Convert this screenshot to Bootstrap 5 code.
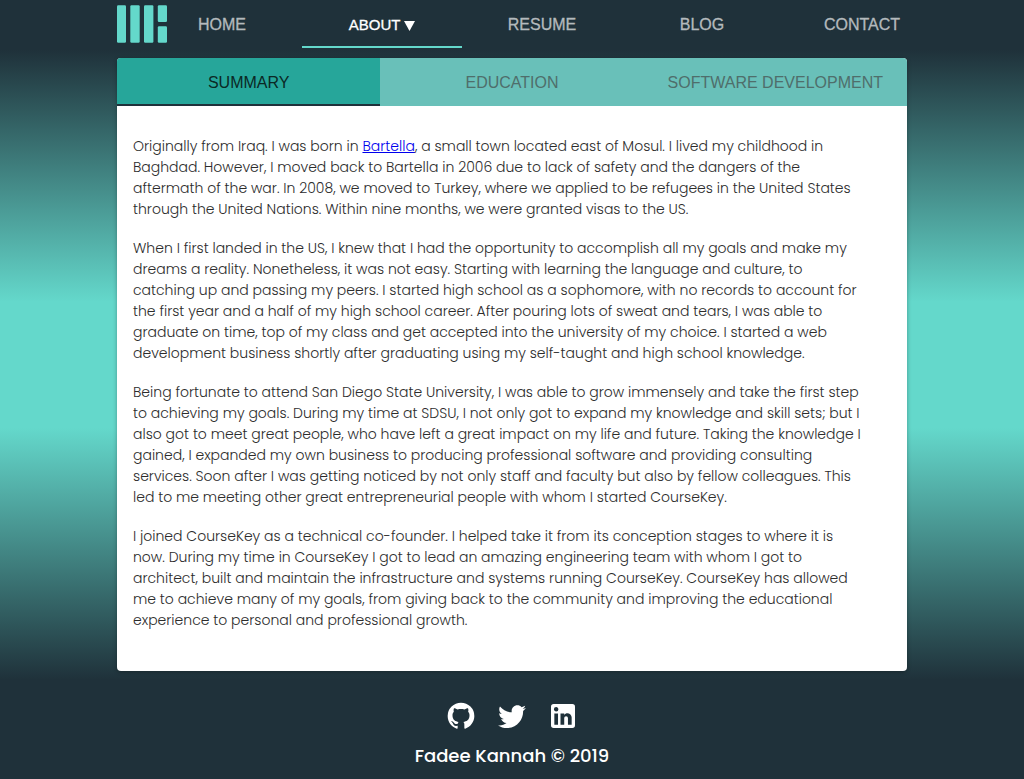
<!DOCTYPE html>
<html lang="en">
<head>
<meta charset="utf-8">
<meta name="viewport" content="width=device-width, initial-scale=1">
<title>Fadee Kannah - About</title>
<link href="https://cdn.jsdelivr.net/npm/bootstrap@5.3.0/dist/css/bootstrap.min.css" rel="stylesheet">
<style>
  :root { --ink: #1f313a; --aqua: #64d8cb; --teal: #26a69a; }
  body { background: var(--ink); font-family: Poppins, Inter, sans-serif; }
  .page-width { width: 100%; max-width: 790px; margin: 0 auto; }
  .site-header { min-height: 50px; }
  .site-links { display: grid; grid-template-columns: 135fr 160fr 160fr 160fr 125fr; }
  .site-links a, .site-links button {
    font: 16px/48px "Liberation Sans", sans-serif; color: #b4babd; text-align: center;
    text-decoration: none; background: none; border: 0; padding: 0; height: 48px; -webkit-text-stroke: 0.3px;
  }
  .site-links a { padding-top: 1px; }
  .site-links .first-link { padding-right: 25px; }
  .site-links .last-link { padding-left: 35px; }
  .site-links .current { color: #fff; font-size: 15px; line-height: 46px; padding-top: 2px; border-bottom: 2px solid var(--aqua); }
  .backdrop { background: linear-gradient(var(--ink), var(--aqua) 40%, var(--aqua) 60%, var(--ink)); padding: 8px 0 9px; }
  .panel { background: #fff; border-radius: 4px; overflow: hidden; box-shadow: 0 1px 4px rgba(0,0,0,.3); }
  .section-tabs { background: #69c0b9; }
  .section-tabs button {
    height: 48px; border: 0; border-bottom: 2px solid transparent; background: none; padding: 3px 0 0;
    font: 16px "Liberation Sans", sans-serif; color: #4f6e6b; white-space: nowrap;
  }
  .section-tabs .active { background: var(--teal); color: #0b2925; border-bottom-color: var(--ink); }
  .story { padding: 30px 16px 22px; font-size: 14px; line-height: 21px; font-weight: 300; color: #2c2c2c; }
  .story p { margin-bottom: 18px; }
  .story a { color: #0000ee; }
  .site-footer { padding: 20px 0 9px; color: #fff; }
  .site-footer a { color: #fff; line-height: 0; }
  .footer-icons { gap: 19px; }
  .credit { font-size: 18px; line-height: 28px; font-weight: 500; margin: 10px 0 0; }
</style>
</head>
<body>
<header class="site-header">
  <nav class="page-width d-flex" aria-label="Main">
    <a href="#" class="flex-shrink-0" aria-label="Fadee Kannah">
      <svg class="d-block" width="50" height="48" viewBox="0 0 50 48" fill="#64d8cb"><rect x="0" y="5.3" width="9" height="37.4" rx="1.2"/><rect x="13.3" y="5.3" width="9.4" height="37.4" rx="1.2"/><rect x="27" y="5.3" width="9.4" height="37.4" rx="1.2"/><rect x="40.8" y="5.3" width="9.2" height="16.6" rx="1.2"/><rect x="40.8" y="26.3" width="9.2" height="16.4" rx="1.2"/></svg>
    </a>
    <div class="site-links flex-grow-1">
      <a href="#" class="first-link">HOME</a>
      <button type="button" class="current">ABOUT <svg width="11" height="10" viewBox="0 0 11 10" fill="currentColor"><path d="M0 0h11L5.500 10z"/></svg></button>
      <a href="#">RESUME</a>
      <a href="#">BLOG</a>
      <a href="#" class="last-link">CONTACT</a>
    </div>
  </nav>
</header>
<main class="backdrop">
  <div class="panel page-width">
    <div class="section-tabs row g-0" role="tablist">
      <button type="button" class="col active" role="tab" aria-selected="true">SUMMARY</button>
      <button type="button" class="col" role="tab" aria-selected="false">EDUCATION</button>
      <button type="button" class="col" role="tab" aria-selected="false">SOFTWARE DEVELOPMENT</button>
    </div>
    <article class="story">
      <p>Originally from Iraq. I was born in <a href="#">Bartella</a>, a small town located east of Mosul. I lived my childhood in <br class="d-none d-md-inline">Baghdad. However, I moved back to Bartella in 2006 due to lack of safety and the dangers of the <br class="d-none d-md-inline">aftermath of the war. In 2008, we moved to Turkey, where we applied to be refugees in the United States <br class="d-none d-md-inline">through the United Nations. Within nine months, we were granted visas to the US.</p>
      <p>When I first landed in the US, I knew that I had the opportunity to accomplish all my goals and make my <br class="d-none d-md-inline">dreams a reality. Nonetheless, it was not easy. Starting with learning the language and culture, to <br class="d-none d-md-inline">catching up and passing my peers. I started high school as a sophomore, with no records to account for <br class="d-none d-md-inline">the first year and a half of my high school career. After pouring lots of sweat and tears, I was able to <br class="d-none d-md-inline">graduate on time, top of my class and get accepted into the university of my choice. I started a web <br class="d-none d-md-inline">development business shortly after graduating using my self-taught and high school knowledge.</p>
      <p>Being fortunate to attend San Diego State University, I was able to grow immensely and take the first step <br class="d-none d-md-inline">to achieving my goals. During my time at SDSU, I not only got to expand my knowledge and skill sets; but I <br class="d-none d-md-inline">also got to meet great people, who have left a great impact on my life and future. Taking the knowledge I <br class="d-none d-md-inline">gained, I expanded my own business to producing professional software and providing consulting <br class="d-none d-md-inline">services. Soon after I was getting noticed by not only staff and faculty but also by fellow colleagues. This <br class="d-none d-md-inline">led to me meeting other great entrepreneurial people with whom I started CourseKey.</p>
      <p>I joined CourseKey as a technical co-founder. I helped take it from its conception stages to where it is <br class="d-none d-md-inline">now. During my time in CourseKey I got to lead an amazing engineering team with whom I got to <br class="d-none d-md-inline">architect, built and maintain the infrastructure and systems running CourseKey. CourseKey has allowed <br class="d-none d-md-inline">me to achieve many of my goals, from giving back to the community and improving the educational <br class="d-none d-md-inline">experience to personal and professional growth.</p>
    </article>
  </div>
</main>
<footer class="site-footer text-center">
  <div class="footer-icons d-flex justify-content-center">
    <a href="#" aria-label="GitHub"><svg width="32" height="32" viewBox="0 0 24 24" fill="currentColor"><path d="M12,2A10,10 0 0,0 2,12C2,16.42 4.87,20.17 8.84,21.5C9.34,21.58 9.5,21.27 9.5,21C9.5,20.77 9.5,20.14 9.5,19.31C6.73,19.91 6.14,17.97 6.14,17.97C5.68,16.81 5.03,16.5 5.03,16.5C4.12,15.88 5.1,15.9 5.1,15.9C6.1,15.97 6.63,16.93 6.63,16.93C7.5,18.45 8.97,18 9.54,17.76C9.63,17.11 9.89,16.67 10.17,16.42C7.95,16.17 5.62,15.31 5.62,11.5C5.62,10.39 6,9.5 6.65,8.79C6.55,8.54 6.2,7.5 6.75,6.15C6.75,6.15 7.59,5.88 9.5,7.17C10.29,6.95 11.15,6.84 12,6.84C12.85,6.84 13.71,6.95 14.5,7.17C16.41,5.88 17.25,6.15 17.25,6.15C17.8,7.5 17.45,8.54 17.35,8.79C18,9.5 18.38,10.39 18.38,11.5C18.38,15.32 16.04,16.16 13.81,16.41C14.17,16.72 14.5,17.33 14.5,18.26C14.5,19.6 14.5,20.68 14.5,21C14.5,21.27 14.66,21.59 15.17,21.5C19.14,20.16 22,16.42 22,12A10,10 0 0,0 12,2Z"/></svg></a>
    <a href="#" aria-label="Twitter"><svg width="32" height="32" viewBox="0 0 24 24" fill="currentColor"><path d="M22.46,6C21.69,6.35 20.86,6.58 20,6.69C20.88,6.16 21.56,5.32 21.88,4.31C21.05,4.81 20.13,5.16 19.16,5.36C18.37,4.5 17.26,4 16,4C13.65,4 11.73,5.92 11.73,8.29C11.73,8.63 11.77,8.96 11.84,9.27C8.28,9.09 5.11,7.38 3,4.79C2.63,5.42 2.42,6.16 2.42,6.94C2.42,8.43 3.17,9.75 4.33,10.5C3.62,10.5 2.96,10.3 2.38,10C2.38,10 2.38,10 2.38,10.03C2.38,12.11 3.86,13.85 5.82,14.24C5.46,14.34 5.08,14.39 4.69,14.39C4.42,14.39 4.15,14.36 3.89,14.31C4.43,16 6,17.26 7.89,17.29C6.43,18.45 4.58,19.13 2.56,19.13C2.22,19.13 1.88,19.11 1.54,19.07C3.44,20.29 5.7,21 8.12,21C16,21 20.33,14.46 20.33,8.79C20.33,8.6 20.33,8.42 20.32,8.23C21.16,7.63 21.88,6.87 22.46,6Z"/></svg></a>
    <a href="#" aria-label="LinkedIn"><svg width="32" height="32" viewBox="0 0 24 24" fill="currentColor"><path d="M19,3A2,2 0 0,1 21,5V19A2,2 0 0,1 19,21H5A2,2 0 0,1 3,19V5A2,2 0 0,1 5,3H19M18.5,18.5V13.2A3.26,3.26 0 0,0 15.24,9.94C14.39,9.94 13.4,10.46 12.92,11.24V10.13H10.13V18.5H12.92V13.57C12.92,12.8 13.54,12.17 14.31,12.17A1.4,1.4 0 0,1 15.71,13.57V18.5H18.5M6.88,8.56A1.68,1.68 0 0,0 8.56,6.88C8.56,5.95 7.81,5.19 6.88,5.19A1.69,1.69 0 0,0 5.19,6.88C5.19,7.81 5.95,8.56 6.88,8.56M8.27,18.5V10.13H5.5V18.5H8.27Z"/></svg></a>
  </div>
  <p class="credit">Fadee Kannah © 2019</p>
</footer>
<script src="https://cdn.jsdelivr.net/npm/bootstrap@5.3.0/dist/js/bootstrap.bundle.min.js"></script>
</body>
</html>
